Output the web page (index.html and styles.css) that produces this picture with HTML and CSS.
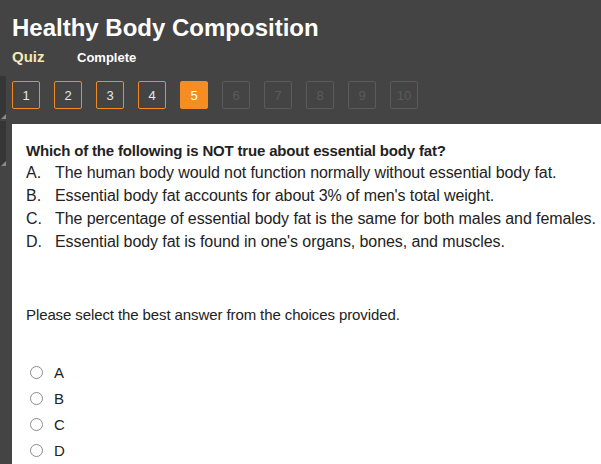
FILE: index.html
```html
<!DOCTYPE html>
<html>
<head>
<meta charset="utf-8">
<link rel="stylesheet" href="styles.css">
</head>
<body>
<div class="edge edge-1"></div>
<div class="edge edge-2"></div>
<header class="top">
  <h1 class="title">Healthy Body Composition</h1>
  <div class="sub">
    <span class="quiz">Quiz</span>
    <span class="status">Complete</span>
  </div>
  <nav class="pager">
    <span class="pg done">1</span>
    <span class="pg done">2</span>
    <span class="pg done">3</span>
    <span class="pg done">4</span>
    <span class="pg current">5</span>
    <span class="pg off">6</span>
    <span class="pg off">7</span>
    <span class="pg off">8</span>
    <span class="pg off">9</span>
    <span class="pg off">10</span>
  </nav>
</header>
<main class="panel">
  <p class="question">Which of the following is NOT true about essential body fat?</p>
  <ol class="answers">
    <li><span class="mk">A.</span>The human body would not function normally without essential body fat.</li>
    <li><span class="mk">B.</span>Essential body fat accounts for about 3% of men's total weight.</li>
    <li><span class="mk">C.</span>The percentage of essential body fat is the same for both males and females.</li>
    <li><span class="mk">D.</span>Essential body fat is found in one's organs, bones, and muscles.</li>
  </ol>
  <p class="prompt">Please select the best answer from the choices provided.</p>
  <div class="choices">
    <label class="choice"><input type="radio" name="a" class="rd"><span>A</span></label>
    <label class="choice"><input type="radio" name="a" class="rd"><span>B</span></label>
    <label class="choice"><input type="radio" name="a" class="rd"><span>C</span></label>
    <label class="choice"><input type="radio" name="a" class="rd"><span>D</span></label>
  </div>
</main>
</body>
</html>
```
FILE: styles.css
```css
html, body {
  margin: 0;
  padding: 0;
}
body {
  background: #444444;
  font-family: "Liberation Sans", Arial, sans-serif;
  width: 601px;
  height: 464px;
  overflow: hidden;
  position: relative;
}
.edge {
  position: absolute;
  left: 0;
  width: 6px;
  background: #363636;
}
.edge::after {
  content: "";
  position: absolute;
  right: 0;
  bottom: 0;
  border-style: solid;
  border-width: 0 0 5px 5px;
  border-color: transparent transparent #8a8a8a transparent;
}
.edge-1 { top: 76px; height: 43px; }
.edge-2 { top: 121px; height: 45px; }
.top {
  padding: 14px 12px 0;
}
.title {
  margin: 0;
  font-size: 24px;
  line-height: 28px;
  font-weight: bold;
  color: #ffffff;
}
.sub {
  margin-top: 6px;
  height: 18px;
  display: flex;
  align-items: baseline;
}
.quiz {
  font-size: 15px;
  line-height: 18px;
  font-weight: bold;
  color: #f7e7b4;
  width: 65px;
}
.status {
  font-size: 13px;
  font-weight: bold;
  color: #ffffff;
}
.pager {
  margin-top: 15px;
  display: flex;
  gap: 14px;
}
.pg {
  box-sizing: border-box;
  width: 28px;
  height: 28px;
  border: 1px solid #f28b22;
  border-radius: 2px;
  display: flex;
  align-items: center;
  justify-content: center;
  font-size: 13px;
  color: #e4e8ee;
}
.pg.current {
  background: #f68d22;
  border-color: #f68d22;
  color: #ffffff;
}
.pg.off {
  border-color: #5b5b5b;
  color: #5b5b5b;
}
.panel {
  margin: 15px 0 0 12px;
  background: #ffffff;
  height: 340px;
  padding: 18px 14px 0;
  color: #222222;
}
.question {
  margin: 0;
  font-size: 15px;
  letter-spacing: -0.17px;
  line-height: 17px;
  font-weight: bold;
}
.answers {
  margin: 2px 0 0;
  padding: 0;
  list-style: none;
  font-size: 16px;
  letter-spacing: -0.08px;
  line-height: 23px;
  white-space: nowrap;
}
.answers li {
  display: flex;
}
.mk {
  width: 29px;
  flex: none;
  letter-spacing: 0;
}
.prompt {
  margin: 53px 0 0;
  font-size: 15px;
  letter-spacing: -0.1px;
  line-height: 18px;
}
.choices {
  margin-top: 39px;
  display: flex;
  flex-direction: column;
  gap: 7px;
}
.choice {
  display: flex;
  align-items: center;
  height: 19px;
  font-size: 15px;
}
.rd {
  appearance: none;
  -webkit-appearance: none;
  margin: 0 11px 0 4px;
  width: 13px;
  height: 13px;
  border: 1px solid #8c8c8c;
  border-radius: 50%;
  background: #ffffff;
  box-sizing: border-box;
}
```
